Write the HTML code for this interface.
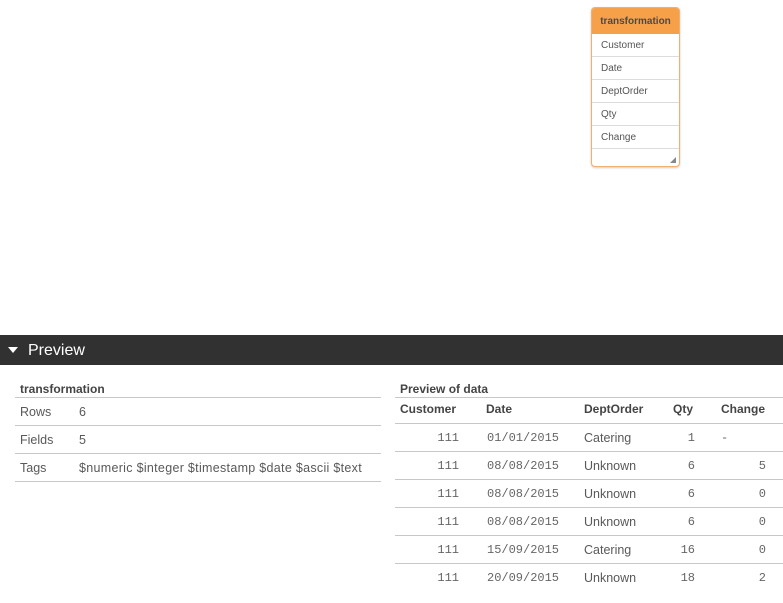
<!DOCTYPE html>
<html><head><style>
*{margin:0;padding:0;box-sizing:border-box}
body{width:783px;height:603px;background:#fff;position:relative;overflow:hidden;font-family:"Liberation Sans",sans-serif;color:#595959}
.a{position:absolute;white-space:nowrap}
.box{position:absolute;left:591px;top:7px;width:89px;height:160px;border:1px solid #f0b070;border-radius:4px;background:#fff;box-shadow:0 1px 2px rgba(0,0,0,.2);overflow:hidden}
.box .h{height:26px;background:#f7a04a;color:#4a4a4a;font-weight:bold;font-size:10px;line-height:28px;text-align:center}
.box .r{height:23px;border-bottom:1px solid #dcdcdc;font-size:10px;line-height:24px;padding-left:9px;color:#555}
.bar{position:absolute;left:0;top:335px;width:783px;height:30px;background:#313131;color:#fff;font-size:16px;line-height:30px}
.ln{position:absolute;height:1px;background:#c8c8c8}
.t{font-size:12.5px;color:#595959}
.m{font-family:"Liberation Mono",monospace;font-size:12px;color:#666}
.b{font-weight:bold;font-size:12px;color:#444}
</style></head><body>
<div class="box"><div class="h">transformation</div>
<div class="r">Customer</div><div class="r">Date</div><div class="r">DeptOrder</div><div class="r">Qty</div><div class="r">Change</div>
<div style="position:absolute;right:3px;bottom:3px;width:0;height:0;border-left:6px solid transparent;border-bottom:6px solid #888"></div></div>
<div class="bar"><span style="position:absolute;left:8px;top:12px;width:0;height:0;border-left:5px solid transparent;border-right:5px solid transparent;border-top:6px solid #fff"></span><span style="position:absolute;left:28px;top:1px">Preview</span></div>

<div class="a b" style="left:20px;top:382px">transformation</div>
<div class="ln" style="left:15px;top:397px;width:366px"></div>
<div class="a t" style="left:20px;top:405px">Rows</div><div class="a t" style="left:79px;top:405px">6</div>
<div class="ln" style="left:15px;top:425px;width:366px"></div>
<div class="a t" style="left:20px;top:433px">Fields</div><div class="a t" style="left:79px;top:433px">5</div>
<div class="ln" style="left:15px;top:453px;width:366px"></div>
<div class="a t" style="left:20px;top:461px">Tags</div><div class="a t" style="left:79px;top:461px;letter-spacing:0.3px">$numeric $integer $timestamp $date $ascii $text</div>
<div class="ln" style="left:15px;top:481px;width:366px"></div>

<div class="a b" style="left:400px;top:382px">Preview of data</div>
<div class="ln" style="left:395px;top:397px;width:388px"></div>
<div class="a b" style="left:400px;top:402px">Customer</div>
<div class="a b" style="left:486px;top:402px">Date</div>
<div class="a b" style="left:584px;top:402px">DeptOrder</div>
<div class="a b" style="left:673px;top:402px">Qty</div>
<div class="a b" style="left:721px;top:402px">Change</div>
<div class="ln" style="left:395px;top:423px;width:388px"></div>

<div id="rows"></div>
<script>
var d=[["01/01/2015","Catering","1","-"],["08/08/2015","Unknown","6","5"],["08/08/2015","Unknown","6","0"],["08/08/2015","Unknown","6","0"],["15/09/2015","Catering","16","0"],["20/09/2015","Unknown","18","2"]];
var h="";d.forEach(function(r,i){var y=431+i*28;
h+='<div class="a m" style="right:324px;top:'+y+'px">111</div>';
h+='<div class="a m" style="left:487px;top:'+y+'px">'+r[0]+'</div>';
h+='<div class="a t" style="left:584px;top:'+y+'px">'+r[1]+'</div>';
h+='<div class="a m" style="right:88px;top:'+y+'px">'+r[2]+'</div>';
if(r[3]=="-")h+='<div class="a m" style="left:721px;top:'+y+'px">-</div>';else h+='<div class="a m" style="right:17px;top:'+y+'px">'+r[3]+'</div>';
if(i<5)h+='<div class="ln" style="left:395px;top:'+(y+20)+'px;width:388px"></div>';});
document.getElementById("rows").innerHTML=h;
</script>
</body></html>
